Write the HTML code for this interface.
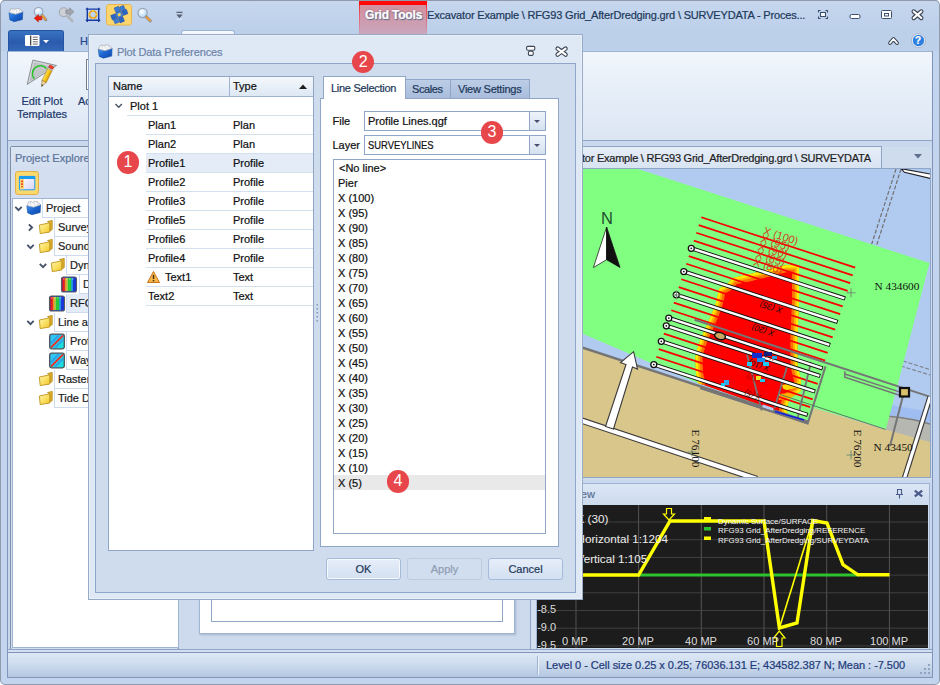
<!DOCTYPE html>
<html>
<head>
<meta charset="utf-8">
<title>Plot Data Preferences</title>
<style>
html,body{margin:0;padding:0;}
body{width:940px;height:685px;position:relative;overflow:hidden;background:#fff;font-family:"Liberation Sans",sans-serif;font-size:11px;color:#111;-webkit-text-stroke:0.22px;}
.abs{position:absolute;}
.t{position:absolute;white-space:nowrap;line-height:14px;}
#win{position:absolute;left:0;top:0;width:940px;height:685px;background:#c9d8ec;border-radius:5px;overflow:hidden;}
#winb{position:absolute;left:0;top:0;width:940px;height:685px;border-radius:5px;border:1px solid #8f9bad;box-sizing:border-box;pointer-events:none;}
#titlebar{left:0;top:0;width:940px;height:51px;background:linear-gradient(#c6d7ee,#bdd0ea 30px,#bdd0ea);}
#ribbon{left:8px;top:51px;width:924px;height:90px;background:linear-gradient(#f1f6fc 0%,#e6eef8 45%,#dce6f3 100%);border-top:1px solid #9db5d5;border-bottom:1px solid #8fa5c6;box-sizing:border-box;}
.badge{position:absolute;width:22.6px;height:22.6px;border-radius:50%;background:#e7464a;color:#fff;font-size:16px;line-height:22.6px;text-align:center;-webkit-text-stroke:0;}
.pr{position:absolute;height:19px;line-height:18px;font-size:11px;color:#1e1e1e;white-space:nowrap;padding-left:3px;border-left:1px solid #cfdcf0;border-bottom:1px solid #cfdcf0;box-sizing:border-box;width:200px;background:#fff;}
.pr.sel{background:#e4ecf7;}
.dr{position:absolute;left:37px;width:170px;height:19px;border-bottom:1px solid #d3e0f0;box-sizing:border-box;font-size:11px;}
.dr.p{left:18px;width:190px;}
.dr.sel{background:#e4ecf7;}
.dr .n{position:absolute;left:2px;top:2px;line-height:14px;white-space:nowrap;}
.dr.p .n{left:3px;}
.dr .ty{position:absolute;left:87px;top:2px;line-height:14px;white-space:nowrap;}
.combo{width:182px;height:20px;background:#fff;border:1px solid #8fa6c8;box-sizing:border-box;}
.combo .cb{position:absolute;right:0;top:0;width:15px;height:18px;background:linear-gradient(#eef3fa,#d5e1f0);border-left:1px solid #8fa6c8;}
.combo .cb:after{content:"";position:absolute;left:4.3px;top:7.5px;border:3.2px solid transparent;border-top:3.6px solid #474f6e;border-bottom:none;}
.li{position:absolute;left:4px;font-size:11px;line-height:14px;white-space:nowrap;}
.btn{position:absolute;top:558px;width:75px;height:22px;line-height:20px;text-align:center;font-size:11px;color:#1e395b;background:linear-gradient(#e6eef9,#d3e0f1);border:1px solid #a6badb;border-radius:3px;box-sizing:border-box;}
.btn.def{box-shadow:inset 0 0 0 1px #f6f9fd;}
.btn.dis{color:#8f9db3;background:#d1deef;border-color:#bccbe1;}

</style>
</head>
<body>
<div id="win">
  <div id="titlebar" class="abs"></div>
  <!-- quick access icons -->
  <svg class="abs" style="left:0;top:0" width="200" height="30" viewBox="0 0 200 30">
    <defs>
      <linearGradient id="bl" x1="0" y1="0" x2="1" y2="1"><stop offset="0" stop-color="#4a98f0"/><stop offset="0.5" stop-color="#1a62cc"/><stop offset="1" stop-color="#0f48a8"/></linearGradient>
      <radialGradient id="lens" cx="0.4" cy="0.35" r="0.7"><stop offset="0" stop-color="#ffffff"/><stop offset="1" stop-color="#a8d4f4"/></radialGradient>
      <g id="appico">
        <path d="M0.8 4.8 L14.6 3.8 L14.2 11.6 L6 13.7 L1.7 11.9 Z" fill="url(#bl)" stroke="#1450a8" stroke-width="0.6" stroke-linejoin="round"/>
        <path d="M1 4.6 L2.6 1 L5.3 0.4 L6.3 1.6 L8.4 0.3 L11.6 0.7 L14.4 3.9 L7.5 6.2 Z" fill="#f6f7f8" stroke="#a4a8ae" stroke-width="0.7" stroke-linejoin="round"/>
        <path d="M4.2 1 L5.2 4 M8 0.8 L8.6 4.4 M11 1 L11.6 4" stroke="#c4c8ce" stroke-width="0.6" fill="none"/>
      </g>
    </defs>
    <use href="#appico" x="8.2" y="8"/>
    <!-- zoom previous -->
    <g>
      <circle cx="38.6" cy="11.8" r="4.3" fill="url(#lens)" stroke="#9aa4b4" stroke-width="1.1"/>
      <path d="M42 15.4 L45.8 19.8" stroke="#8f949c" stroke-width="3.2" stroke-linecap="round"/>
      <path d="M42.3 15.7 L45.4 19.3" stroke="#f09a30" stroke-width="2" stroke-linecap="round"/>
      <path d="M34.2 18.2 L38.4 14.4 L38.4 16.5 L41.8 16.5 L41.8 19.9 L38.4 19.9 L38.4 22 Z" fill="#e8200c" stroke="#b81400" stroke-width="0.5" stroke-linejoin="round"/>
    </g>
    <!-- zoom next grey -->
    <g>
      <circle cx="63.8" cy="12.2" r="4.4" fill="#cdd1d7" stroke="#a6abb3" stroke-width="1.1"/>
      <path d="M67.2 15.8 L72.3 21" stroke="#b2b6bc" stroke-width="2.6" stroke-linecap="round"/>
      <path d="M73.9 11.8 L69.6 7.9 L69.6 10 L65.8 10 L65.8 13.6 L69.6 13.6 L69.6 15.7 Z" fill="#a2a6ac" stroke="#7f848c" stroke-width="0.6" stroke-linejoin="round"/>
    </g>
    <!-- extents -->
    <g>
      <path d="M87.3 7.8 V22 M98.7 7.8 V22 M85.8 9.1 H100.2 M85.8 20.2 H100.2" stroke="#1638a0" stroke-width="1.4" fill="none"/>
      <circle cx="93" cy="14.6" r="3.6" fill="none" stroke="#e49a18" stroke-width="1.7"/>
      <g fill="#f8d038"><circle cx="93" cy="11" r="1"/><circle cx="93" cy="18.2" r="1"/><circle cx="89.4" cy="14.6" r="1"/><circle cx="96.6" cy="14.6" r="1"/></g>
    </g>
    <!-- highlighted button -->
    <rect x="106.5" y="4.5" width="25" height="20.6" rx="2.6" fill="#fbd66e" stroke="#e6b64c"/>
    <g transform="translate(119.3 14.6) rotate(-22)">
      <rect x="-8.4" y="-2.3" width="5" height="4.6" fill="#2a66c8" stroke="#1c4ea4" stroke-width="0.5"/>
      <rect x="3.4" y="-2.3" width="5" height="4.6" fill="#2a66c8" stroke="#1c4ea4" stroke-width="0.5"/>
      <rect x="-2.3" y="-8" width="4.6" height="5" fill="#3a7ad8" stroke="#1c4ea4" stroke-width="0.5"/>
      <rect x="-2.3" y="3" width="4.6" height="5" fill="#2a66c8" stroke="#1c4ea4" stroke-width="0.5"/>
      <rect x="-7.4" y="2.6" width="4.4" height="4.4" fill="#3a7ad8" stroke="#1c4ea4" stroke-width="0.4"/>
      <rect x="3" y="-7" width="4.4" height="4.4" fill="#3a7ad8" stroke="#1c4ea4" stroke-width="0.4"/>
      <rect x="-2.6" y="-2.6" width="5.2" height="5.2" fill="#4a8ae0" stroke="#1c4ea4" stroke-width="0.5"/>
      <circle cx="0" cy="0" r="1.5" fill="#f6d84a"/>
    </g>
    <!-- magnifier -->
    <g>
      <circle cx="142.6" cy="13" r="4.6" fill="url(#lens)" stroke="#98a2b2" stroke-width="1.2"/>
      <path d="M146.2 16.8 L150.3 20.8" stroke="#8f949c" stroke-width="3.2" stroke-linecap="round"/>
      <path d="M146.5 17.1 L150 20.5" stroke="#f09a30" stroke-width="2" stroke-linecap="round"/>
    </g>
    <!-- customize -->
    <path d="M176.5 12.3 h6" stroke="#566274" stroke-width="1.3"/>
    <path d="M176.3 14.6 h6.4 l-3.2 3.6 z" fill="#566274"/>
    <path d="M176.8 19.3 h5.4" stroke="#e8eef6" stroke-width="0.8"/>
  </svg>
  <!-- Grid tools contextual tab -->
  <div class="abs" style="left:359px;top:0;width:68px;height:34px;background:linear-gradient(#d48f9d 0,#d095a4 35%,#caa6bd 100%);"></div>
  <div class="abs" style="left:359px;top:0;width:1px;height:34px;background:linear-gradient(#ff1010,#e85868 40%,rgba(216,150,170,0) 100%);"></div>
  <div class="abs" style="left:426px;top:0;width:1px;height:34px;background:linear-gradient(#ff1010,#e85868 40%,rgba(216,150,170,0) 100%);"></div>
  <div class="abs" style="left:359px;top:1px;width:68px;height:4px;background:#ff0808;"></div>
  <div class="t" style="left:365px;top:8px;font-size:12px;font-weight:bold;color:#fff;text-shadow:1px 1px 1px #4f6f90,0 0 2px #8a5868;letter-spacing:-0.2px;">Grid Tools</div>
  <div class="t" id="ttl" style="left:427px;top:8px;font-size:11px;color:#1e395b;letter-spacing:-0.17px;">Excavator Example \ RFG93 Grid_AfterDredging.grd \ SURVEYDATA - Proces...</div>
  <!-- window controls -->
  <svg class="abs" style="left:800px;top:0" width="140" height="52" viewBox="800 0 140 52">
    <g fill="none" stroke="#3b4f6e" stroke-width="1.1">
      <path d="M818.5 12.5 v-2 h2 M825.5 10.5 h2 v2 M827.5 16.5 v2 h-2 M820.5 18.5 h-2 v-2"/>
      <rect x="820.5" y="12.5" width="5" height="4" fill="#fff"/>
    </g>
    <rect x="850" y="14.5" width="10" height="4" rx="1.5" fill="#fff" stroke="#3b4f6e" stroke-width="1"/>
    <rect x="881.5" y="10.5" width="10" height="8" rx="1" fill="#fff" stroke="#3b4f6e" stroke-width="1"/>
    <rect x="884.5" y="13.5" width="4" height="2.5" fill="#fff" stroke="#3b4f6e" stroke-width="1"/>
    <path d="M913.7 11.5 L921.3 18 M921.3 11.5 L913.7 18" stroke="#3b4556" stroke-width="4.4" stroke-linecap="round"/>
    <path d="M913.7 11.5 L921.3 18 M921.3 11.5 L913.7 18" stroke="#fff" stroke-width="2.2" stroke-linecap="round"/>
    <path d="M890 43 l3.5 -4 l3.5 4" fill="none" stroke="#3b4556" stroke-width="3.8" stroke-linejoin="round" stroke-linecap="round"/>
    <path d="M890 43 l3.5 -4 l3.5 4" fill="none" stroke="#fff" stroke-width="1.8" stroke-linejoin="round" stroke-linecap="round"/>
    <circle cx="918.5" cy="40.5" r="6.3" fill="#2f7fe0" stroke="#e8eef6" stroke-width="1.3"/>
    <circle cx="918.5" cy="40.5" r="7" fill="none" stroke="#8f9fb6" stroke-width="0.6"/>
  </svg>
  <div class="t" style="left:915px;top:34px;font-size:10px;font-weight:bold;color:#fff;">?</div>
  <!-- app button -->
  <div class="abs" style="left:8px;top:30px;width:56px;height:21px;background:linear-gradient(#3a72c2,#2a5cae 55%,#3468b8);border:1px solid #2554a3;border-bottom:none;border-radius:3px 3px 0 0;box-sizing:border-box;"></div>
  <svg class="abs" style="left:8px;top:30px" width="56" height="21" viewBox="0 0 56 21">
    <rect x="17" y="5" width="14.5" height="11" rx="1.2" fill="#fff"/>
    <rect x="22" y="5.5" width="1.3" height="10" fill="#4a4a4a"/>
    <path d="M24.8 7.2 h5 M24.8 9.5 h5 M24.8 11.8 h5 M24.8 14.1 h5" stroke="#5a5a5a" stroke-width="0.9"/>
    <path d="M35 10 h6 l-3 3.2 z" fill="#fff"/>
  </svg>
  <div class="t" style="left:80px;top:34px;font-size:11px;color:#23458f;">Ho</div>
  <div class="abs" style="left:181px;top:30px;width:54px;height:22px;background:#f4f8fc;border:1px solid #9db5d5;border-bottom:none;border-radius:3px 3px 0 0;box-sizing:border-box;"></div>
  <div class="abs" style="left:0;top:0;width:940px;height:1px;background:#8f9bad;"></div>

  <div id="ribbon" class="abs"></div>
  <!-- ribbon content -->
  <svg class="abs" style="left:20px;top:56px" width="46" height="36" viewBox="0 0 46 36">
    <defs><linearGradient id="pen" x1="0" y1="0" x2="1" y2="0"><stop offset="0" stop-color="#fbe36a"/><stop offset="0.5" stop-color="#f8c818"/><stop offset="1" stop-color="#d89a08"/></linearGradient></defs>
    <path d="M7.2 28.4 L12.8 4.1 L36.6 9.5 Z" fill="#d4d7d9" stroke="#8d9297" stroke-width="1" stroke-linejoin="round"/>
    <path d="M10.3 24.6 L14.5 7 L31.5 10.9 Z" fill="#c2c6c9" stroke="#a4a9ae" stroke-width="0.5"/>
    <path d="M14.3 22.9 A7.6 7.6 0 0 1 26.5 12.6" fill="none" stroke="#2cc02c" stroke-width="1.5"/>
    <g transform="translate(31.2 11.1) rotate(26.3)">
      <rect x="-2.4" y="2.6" width="4.8" height="13.4" fill="url(#pen)" stroke="#a87808" stroke-width="0.5"/>
      <rect x="-2.4" y="1.3" width="4.8" height="1.5" fill="#d8dce0" stroke="#8a8e94" stroke-width="0.4"/>
      <rect x="-2.4" y="-1.4" width="4.8" height="2.8" rx="1" fill="#f04030" stroke="#b02010" stroke-width="0.5"/>
      <path d="M-2.4 16 L0 21.6 L2.4 16 Z" fill="#f4d8a4" stroke="#8a6a30" stroke-width="0.5"/>
      <path d="M-0.9 19.6 L0 21.8 L0.9 19.6 Z" fill="#333"/>
    </g>
  </svg>
  <div class="t" style="left:8px;top:95px;width:68px;text-align:center;color:#1e3a6e;font-size:11px;line-height:12.500px;white-space:normal;">Edit Plot Templates</div>
  <div class="t" style="left:78px;top:95px;color:#1e3a6e;font-size:11px;line-height:12.500px;">Ac</div>
  <div class="abs" style="left:86px;top:59px;width:3px;height:29px;background:#fff;border-left:1px solid #6f7c90;border-top:1px solid #6f7c90;border-bottom:1px solid #6f7c90;"></div>

  <!-- left Project Explorer panel -->
  <div class="abs" style="left:10px;top:146px;width:169px;height:504px;background:#d3dff0;border:1px solid #7f8fa8;border-radius:2px;box-sizing:border-box;"></div>
  <div class="abs" style="left:11px;top:147px;width:167px;height:21px;background:linear-gradient(#dbe6f4,#d3dff0);"></div>
  <div class="t" style="left:15px;top:151px;font-size:11px;color:#5b7398;">Project Explorer</div>
  <div class="abs" style="left:15px;top:171px;width:24px;height:24px;background:#fbd96f;border:1px solid #e2b248;border-radius:3px;box-sizing:border-box;"></div>
  <svg class="abs" style="left:15px;top:171px" width="24" height="24" viewBox="0 0 24 24">
    <defs><linearGradient id="wn" x1="0" y1="0" x2="1" y2="1"><stop offset="0" stop-color="#ffffff"/><stop offset="1" stop-color="#d8d4f4"/></linearGradient></defs>
    <rect x="4.4" y="5.4" width="15.4" height="13.4" rx="0.8" fill="url(#wn)" stroke="#189cf0" stroke-width="1"/>
    <rect x="4" y="5" width="16.2" height="3" rx="0.8" fill="#189cf0"/>
    <rect x="5" y="8" width="4" height="10.3" fill="#fbdc78"/>
    <rect x="6" y="9.4" width="2" height="1.8" fill="#f0502c"/>
    <rect x="6" y="12.2" width="2" height="1.8" fill="#f0502c"/>
    <rect x="6" y="15" width="2" height="1.2" fill="#f0502c"/>
  </svg>
  <div class="abs" style="left:12px;top:198px;width:167px;height:450px;background:#fff;border:1px solid #9fb4d2;box-sizing:border-box;"></div>
  <!-- tree rows -->
  <div id="ptree" class="abs" style="left:13px;top:199px;width:165px;height:210px;overflow:hidden;">
    <div class="pr" style="top:0;left:29px;">Project</div>
    <div class="pr" style="top:19px;left:41px;">Survey</div>
    <div class="pr" style="top:38px;left:41px;">Sounding Grid</div>
    <div class="pr" style="top:57px;left:53px;">Dynamic</div>
    <div class="pr" style="top:76px;left:66px;">Dynamic</div>
    <div class="pr sel" style="top:95px;left:53px;">RFG93</div>
    <div class="pr" style="top:114px;left:41px;">Line and area</div>
    <div class="pr" style="top:133px;left:53px;">Profile Lines</div>
    <div class="pr" style="top:152px;left:53px;">Waypoints</div>
    <div class="pr" style="top:171px;left:41px;">Raster</div>
    <div class="pr" style="top:190px;left:41px;">Tide Data</div>
  </div>
  <svg class="abs" style="left:13px;top:199px" width="80" height="210" viewBox="0 0 80 210">
    <defs>
      <g id="chev-d"><path d="M-3.2 -1.6 L0 1.6 L3.2 -1.6" fill="none" stroke="#46526a" stroke-width="1.9"/></g>
      <g id="chev-r"><path d="M-1.6 -3.2 L1.6 0 L-1.6 3.2" fill="none" stroke="#46526a" stroke-width="1.9"/></g>
      <g id="folder">
        <path d="M1.5 -5.4 L6.2 -6.6 L6.2 2.6 L3.8 4 L3.8 -4 Z" fill="#e2b22c" stroke="#b48614" stroke-width="0.8" stroke-linejoin="round"/>
        <path d="M-6.6 -2 L3.8 -4.2 L3.8 5 L-5.8 6.6 Z" fill="url(#fold)" stroke="#c0941c" stroke-width="0.9" stroke-linejoin="round"/>
      </g>
      <linearGradient id="fold" x1="0" y1="0" x2="1" y2="1"><stop offset="0" stop-color="#fff6b0"/><stop offset="0.6" stop-color="#f8dc58"/><stop offset="1" stop-color="#eec030"/></linearGradient>
      <g id="gridicon">
        <rect x="-7.5" y="-7.5" width="15" height="15" rx="2" fill="#2038c8" stroke="#555a60" stroke-width="1.1"/>
        <rect x="-6.6" y="-6.6" width="2.4" height="13.2" fill="#f01818"/>
        <rect x="-4.2" y="-6.6" width="1.6" height="13.2" fill="#f89018"/>
        <rect x="-2.6" y="-6.6" width="1.4" height="13.2" fill="#f0e828"/>
        <rect x="-1.2" y="-6.6" width="3.6" height="13.2" fill="#28c838"/>
        <rect x="2.4" y="-6.6" width="1.4" height="13.2" fill="#28c8e8"/>
        <rect x="3.8" y="-6.6" width="2.8" height="13.2" fill="#1838d8"/>
        <path d="M-6 -5.5 h12" stroke="#fff" stroke-opacity="0.5" stroke-width="1.2" stroke-dasharray="1.5 1.5"/>
      </g>
      <g id="lineicon">
        <rect x="-7.3" y="-7.3" width="14.6" height="14.6" rx="1.8" fill="url(#cy)" stroke="#4a5258" stroke-width="1.3"/>
        <path d="M-6.2 2 L2 -6.2 M-2 6.2 L6.2 -2" stroke="#3878e8" stroke-opacity="0.55" stroke-width="2"/>
        <path d="M-6 6 L6 -6" stroke="#e8302a" stroke-width="1.8"/>
      </g>
      <linearGradient id="cy" x1="0" y1="0" x2="1" y2="1"><stop offset="0" stop-color="#38b8f8"/><stop offset="0.5" stop-color="#20d8ec"/><stop offset="1" stop-color="#18e0d8"/></linearGradient>
    </defs>
    <use href="#chev-d" x="5.5" y="9.5"/>
    <use href="#appico" x="13" y="2"/>
    <use href="#chev-r" x="17.5" y="28.5"/>
    <use href="#folder" x="33" y="28"/>
    <use href="#chev-d" x="17.5" y="47.5"/>
    <use href="#folder" x="33" y="47"/>
    <use href="#chev-d" x="30" y="66.5"/>
    <use href="#folder" x="45" y="66"/>
    <use href="#gridicon" x="56" y="85.5"/>
    <use href="#gridicon" x="44" y="104.5"/>
    <use href="#chev-d" x="17.5" y="123.5"/>
    <use href="#folder" x="33" y="123"/>
    <use href="#lineicon" x="44" y="142.5"/>
    <use href="#lineicon" x="44" y="161.5"/>
    <use href="#folder" x="33" y="180"/>
    <use href="#folder" x="33" y="199"/>
  </svg>

  <!-- page/doc area behind dialog -->
  <div class="abs" style="left:179px;top:147px;width:352px;height:503px;background:#cddaed;"></div>
  <div class="abs" style="left:199px;top:160px;width:316px;height:474px;background:#fff;border:1px solid #9fb4d2;box-sizing:border-box;box-shadow:1px 1px 2px rgba(90,110,140,.35);"></div>
  <div class="abs" style="left:211px;top:172px;width:292px;height:450px;background:#fff;border:1px solid #8fa6c8;box-sizing:border-box;"></div>
  <!-- splitter -->
  <div class="abs" style="left:530px;top:147px;width:6px;height:503px;background:#d3dff0;border-left:1px solid #8fa5c6;box-sizing:border-box;"></div>
  <!-- right doc container -->
  <div class="abs" style="left:536px;top:147px;width:396px;height:333px;background:#cfdcee;"></div>
  <!-- doc tab -->
  <div class="abs" style="left:540px;top:146px;width:342px;height:23px;background:linear-gradient(#e6edf7,#d8e3f2);border:1px solid #8fa5c6;border-bottom:none;box-sizing:border-box;"></div>
  <div class="t" id="doctab" style="left:582px;top:151px;font-size:11px;letter-spacing:-0.24px;color:#1e1e1e;">tor Example \ RFG93 Grid_AfterDredging.grd \ SURVEYDATA</div>
  <svg class="abs" style="left:910.5px;top:151px" width="14" height="10" viewBox="0 0 14 10"><path d="M3 3 h8 l-4 4.5 z" fill="#5f6f8f"/></svg>
  <!-- map frame -->
  <div class="abs" style="left:581px;top:168px;width:350px;height:310px;background:#b3cbee;border:1px solid #8fa5c6;box-sizing:border-box;"></div>

  <svg class="abs" style="left:582px;top:169px" width="348" height="308" viewBox="582 169 348 308" font-family="'Liberation Sans',sans-serif">
  <defs><clipPath id="gclip"><polygon points="582,169 638,169 929.5,263 886,429 814,408 808,421.7 698,383 582,333.5"/></clipPath><clipPath id="oclip"><polygon points="799,265 785.5,265.3 751.5,273.8 732.8,278 727.7,284 719,289 716.6,301 712.3,313 708,323 700.4,340 697,350 695.5,357 696,373 698,383 690,400 700,440 800,440 786,410 789.4,399 800.5,391 801,380 797.5,366 797.3,340 799,300"/></clipPath></defs>
  <rect x="582" y="169" width="348" height="308" fill="#b1caf0"/>
  <polygon points="886,404 930,412 930,426 886,418" fill="#9fbdf0"/>
  <polygon points="886,416 900,417 915,420 930,424 930,443 884,430" fill="#b5b7b0"/>
  <path d="M886,416 L900,417.5 L915,420 L930,424" stroke="#7f7f7f" stroke-width="1.5" fill="none"/>
  <polygon points="582,347.5 808,421.7 814,408 885.5,429.4 930,442 930,477 582,477" fill="#d9c68b"/>
  <path d="M896,169 L871.4,245 M901,169 L876.4,246" stroke="#707070" stroke-width="1.2" stroke-dasharray="4 1.8" fill="none"/>
  <path d="M903,361 L930,369.5 M901,366 L930,375" stroke="#7a8088" stroke-width="1.1" stroke-dasharray="4 1.8" fill="none"/>
  <polygon points="901,168.6 931,174.2 931,178.6 904.5,172.3" fill="#fff" stroke="#222" stroke-width="1.1"/>
  <polygon points="582,169 638,169 929.5,263 886,429 814,408 808,421.7 698,383 582,333.5" fill="#80ff80"/>
  <g clip-path="url(#gclip)"><g clip-path="url(#oclip)">
   <polygon points="799,265 785.5,265.3 751.5,273.8 732.8,278 727.7,284 719,289 716.6,301 712.3,313 708,323 700.4,340 697,350 695.5,357 696,373 698,383 690,400 700,440 800,440 786,410 789.4,399 800.5,391 801,380 797.5,366 797.3,340 799,300" fill="#ff0000"/>
   <polygon points="799,265 785.5,265.3 751.5,273.8 732.8,278 727.7,284 719,289 716.6,301 712.3,313 708,323 700.4,340 697,350 695.5,357 696,373 698,383 690,400 700,440 800,440 786,410 789.4,399 800.5,391 801,380 797.5,366 797.3,340 799,300" fill="none" stroke="#ff7000" stroke-width="14" stroke-linejoin="round"/>
   <polygon points="799,265 785.5,265.3 751.5,273.8 732.8,278 727.7,284 719,289 716.6,301 712.3,313 708,323 700.4,340 697,350 695.5,357 696,373 698,383 690,400 700,440 800,440 786,410 789.4,399 800.5,391 801,380 797.5,366 797.3,340 799,300" fill="none" stroke="#ffb400" stroke-width="8.5" stroke-linejoin="round"/>
   <polygon points="799,265 785.5,265.3 751.5,273.8 732.8,278 727.7,284 719,289 716.6,301 712.3,313 708,323 700.4,340 697,350 695.5,357 696,373 698,383 690,400 700,440 800,440 786,410 789.4,399 800.5,391 801,380 797.5,366 797.3,340 799,300" fill="none" stroke="#f8f000" stroke-width="4.4" stroke-linejoin="round"/>
   <polygon points="782,385 803,381 803,386 784,391" fill="#ffd800"/>
   <polygon points="778,394 797,392.5 796,397 779,400" fill="#ffb000"/>
  </g></g>
  <path d="M582,347.5 L808,421.7" stroke="#757575" stroke-width="2.5" fill="none"/>
  <path d="M700,388.3 L808,423.8" stroke="#3a4ac8" stroke-width="0.8" fill="none"/>
  <polygon points="763,404.5 773.5,408 773,411 762,407.3" fill="#b1caf0"/>
  <path d="M701.3,217.3 l153.9,50.3" stroke="#fa0000" stroke-width="1.7"/>
  <path d="M698.8,225.1 l153.9,50.3" stroke="#fa0000" stroke-width="1.7"/>
  <path d="M696.3,232.8 l153.9,50.3" stroke="#fa0000" stroke-width="1.7"/>
  <path d="M693.8,240.6 l153.9,50.3" stroke="#fa0000" stroke-width="1.7"/>
  <path d="M688.8,256.1 l153.9,50.3" stroke="#fa0000" stroke-width="1.7"/>
  <path d="M686.3,263.8 l153.9,50.3" stroke="#fa0000" stroke-width="1.7"/>
  <path d="M681.3,279.3 l153.9,50.3" stroke="#fa0000" stroke-width="1.7"/>
  <path d="M678.8,287.1 l153.9,50.3" stroke="#fa0000" stroke-width="1.7"/>
  <path d="M673.8,302.6 l153.9,50.3" stroke="#fa0000" stroke-width="1.7"/>
  <path d="M671.3,310.3 l153.9,50.3" stroke="#fa0000" stroke-width="1.7"/>
  <path d="M663.8,333.6 l153.9,50.3" stroke="#fa0000" stroke-width="1.7"/>
  <path d="M658.8,349.1 l153.9,50.3" stroke="#fa0000" stroke-width="1.7"/>
  <path d="M656.3,356.8 l153.9,50.3" stroke="#fa0000" stroke-width="1.7"/>
  <g stroke="#757575" fill="none">
   <path d="M694.5,319.8 L929.6,396.6" stroke-width="2"/>
   <path d="M825.5,366.4 L807.7,423.4 L700,388" stroke-width="2"/>
   <path d="M811,362 L797.4,419" stroke-width="1.8"/>
   <path d="M747,354.5 L761.7,410.6" stroke-width="1.8"/>
   <path d="M787,367 L774.5,408" stroke-width="1.8"/>
   <path d="M844.8,371.3 L844.8,377.3 L899.5,395.2" stroke-width="1.5"/>
   <path d="M844.8,374 L901,392.4" stroke-width="1.5"/>
   <path d="M904,392 L890,446" stroke-width="2"/>
   <path d="M780,394.5 L885.5,429.4" stroke="#4f6f5f" stroke-width="0.9"/>
  </g>
  <text transform="translate(762.5,234.0) rotate(18)" font-size="11" fill="#dc2a18" fill-opacity="0.9">X (100)</text>
  <text transform="translate(760.0,241.8) rotate(18)" font-size="11" fill="#dc2a18" fill-opacity="0.9">X (95)</text>
  <text transform="translate(757.5,249.5) rotate(18)" font-size="11" fill="#dc2a18" fill-opacity="0.9">X (90)</text>
  <text transform="translate(755.0,257.2) rotate(18)" font-size="11" fill="#dc2a18" fill-opacity="0.9">X (85)</text>
  <text transform="translate(752.5,265.0) rotate(18)" font-size="11" fill="#dc2a18" fill-opacity="0.9">X (80)</text>
  <path d="M691.3,248.3 l153.9,50.3" stroke="#111" stroke-width="4.2"/>
  <path d="M692.3,248.6 l152.1,49.7" stroke="#fff" stroke-width="2.4"/>
  <circle cx="691.3" cy="248.3" r="3" fill="#fff" stroke="#111" stroke-width="1.3"/><circle cx="691.3" cy="248.3" r="0.9" fill="#111"/>
  <path d="M683.8,271.6 l153.9,50.3" stroke="#111" stroke-width="4.2"/>
  <path d="M684.8,271.9 l152.1,49.7" stroke="#fff" stroke-width="2.4"/>
  <circle cx="683.8" cy="271.6" r="3" fill="#fff" stroke="#111" stroke-width="1.3"/><circle cx="683.8" cy="271.6" r="0.9" fill="#111"/>
  <path d="M676.3,294.8 l153.9,50.3" stroke="#111" stroke-width="4.2"/>
  <path d="M677.3,295.1 l152.1,49.7" stroke="#fff" stroke-width="2.4"/>
  <circle cx="676.3" cy="294.8" r="3" fill="#fff" stroke="#111" stroke-width="1.3"/><circle cx="676.3" cy="294.8" r="0.9" fill="#111"/>
  <path d="M668.8,318.1 l153.9,50.3" stroke="#111" stroke-width="4.2"/>
  <path d="M669.8,318.4 l152.1,49.7" stroke="#fff" stroke-width="2.4"/>
  <circle cx="668.8" cy="318.1" r="3" fill="#fff" stroke="#111" stroke-width="1.3"/><circle cx="668.8" cy="318.1" r="0.9" fill="#111"/>
  <path d="M666.3,325.8 l153.9,50.3" stroke="#111" stroke-width="4.2"/>
  <path d="M667.3,326.1 l152.1,49.7" stroke="#fff" stroke-width="2.4"/>
  <circle cx="666.3" cy="325.8" r="3" fill="#fff" stroke="#111" stroke-width="1.3"/><circle cx="666.3" cy="325.8" r="0.9" fill="#111"/>
  <path d="M661.3,341.3 l153.9,50.3" stroke="#111" stroke-width="4.2"/>
  <path d="M662.3,341.6 l152.1,49.7" stroke="#fff" stroke-width="2.4"/>
  <circle cx="661.3" cy="341.3" r="3" fill="#fff" stroke="#111" stroke-width="1.3"/><circle cx="661.3" cy="341.3" r="0.9" fill="#111"/>
  <path d="M653.8,364.6 l153.9,50.3" stroke="#111" stroke-width="4.2"/>
  <path d="M654.8,364.9 l152.1,49.7" stroke="#fff" stroke-width="2.4"/>
  <circle cx="653.8" cy="364.6" r="3" fill="#fff" stroke="#111" stroke-width="1.3"/><circle cx="653.8" cy="364.6" r="0.9" fill="#111"/>
  <text transform="translate(783,308) rotate(197.5)" font-size="8.5" fill="#111" font-style="italic">X (35)</text>
  <text transform="translate(775,331) rotate(197.5)" font-size="8.5" fill="#111" font-style="italic">X (20)</text>
  <text transform="translate(776,356) rotate(197.5)" font-size="8" fill="#c00000" font-style="italic">X (15)</text>
  <text transform="translate(770,366) rotate(197.5)" font-size="8" fill="#111" font-style="italic">X (10)</text>
  <text transform="translate(768,380) rotate(197.5)" font-size="8" fill="#c00000" font-style="italic">X (10)</text>
  <text transform="translate(762,395) rotate(197.5)" font-size="8" fill="#7a0000" font-style="italic">X (5)</text>
  <g><rect x="752" y="353" width="10" height="5" fill="#1030d0"/><rect x="757" y="358" width="8" height="4" fill="#1890f0"/><rect x="763" y="362" width="6" height="4" fill="#20c8f0"/><rect x="747" y="362" width="5" height="4" fill="#20c8f0"/><rect x="764" y="352" width="8" height="4" fill="#102080"/><rect x="772" y="356" width="5" height="3" fill="#20a0f0"/><rect x="756" y="376" width="5" height="4" fill="#f0e020"/><rect x="760" y="379" width="5" height="3" fill="#20c8f0"/><rect x="724" y="380" width="5" height="5" fill="#30a8f0"/><rect x="721" y="383" width="4" height="3" fill="#20c8f0"/></g>
  <path d="M775,411.5 L804,420" stroke="#1020e0" stroke-width="1.8"/>
  <ellipse cx="720" cy="336" rx="5.5" ry="3.5" fill="#c8a860" stroke="#111" stroke-width="1.5" transform="rotate(17 720 336)"/>
  <rect x="900" y="388" width="9" height="8.5" fill="#d9c06a" stroke="#111" stroke-width="2.2"/>
  <path d="M930,397 L904.5,478" stroke="#3a3a3a" stroke-width="5.5"/><path d="M930,397 L904.5,478" stroke="#fff" stroke-width="3.2"/>
  <path d="M580,420 L757,479" stroke="#3a3a3a" stroke-width="6.5"/><path d="M580,420 L757,479" stroke="#fff" stroke-width="4.3"/>
  <path d="M605.5,426.5 L626,364.5 L620.5,362.5 L633.6,351.7 L637.5,369 L632.5,367 L613.5,429 Z" fill="#fff" stroke="#3a3a3a" stroke-width="1.1" stroke-linejoin="miter"/>
  <polygon points="606.6,227 593.4,267.5 606.6,259.7" fill="#fff" stroke="#222" stroke-width="0.8"/>
  <polygon points="606.6,227 620,267.5 606.6,259.7" fill="#111" stroke="#111" stroke-width="0.8"/>
  <text x="601" y="223.5" font-size="16.5" fill="#1f4f2f">N</text>
  <path d="M846.5,292.8 h9 M851.0,288.3 v9" stroke="#6f8f6f" stroke-width="1"/>
  <path d="M672.0,295.0 h9 M676.5,290.5 v9" stroke="#6f8f6f" stroke-width="1"/>
  <path d="M846.5,455.0 h9 M851.0,450.5 v9" stroke="#6f8f6f" stroke-width="1"/>
  <path d="M687.5,452.0 h9 M692.0,447.5 v9" stroke="#6f8f6f" stroke-width="1"/>
  <text x="874.5" y="289.5" font-size="11.3" font-family="'Liberation Serif',serif" fill="#111">N 434600</text>
  <text x="873.5" y="451" font-size="11.3" font-family="'Liberation Serif',serif" fill="#111">N 43450</text>
  <text transform="translate(853.5,429.5) rotate(90)" font-size="11.3" font-family="'Liberation Serif',serif" fill="#111">E 76200</text>
  <text transform="translate(691.5,429.5) rotate(90)" font-size="11.3" font-family="'Liberation Serif',serif" fill="#111">E 76100</text>
  </svg>

  <div class="abs" style="left:536px;top:483px;width:394px;height:167px;background:#cfdcee;border:1px solid #9fb4d2;box-sizing:border-box;"></div>
  <div class="abs" style="left:537px;top:484px;width:392px;height:21px;background:linear-gradient(#dce7f5,#ccdaee);"></div>
  <div class="t" id="pv" style="left:537px;top:487px;font-size:11px;color:#5b7398;">Profile View</div>
  <svg class="abs" style="left:892px;top:486px" width="36" height="16" viewBox="892 486 36 16"><g stroke="#4a5a8a" fill="none"><path d="M897.5 489.5 h4 v5 h-4 z M896 494.5 h7 M899.5 494.5 v4" stroke-width="1.1"/><path d="M914.8 490.6 l7.4 5.8 M922.2 490.6 l-7.4 5.8" stroke-width="2.3"/></g></svg>
  <svg class="abs" style="left:537px;top:505px" width="390.8" height="143" viewBox="537 505 390.8 143" font-family="'Liberation Sans',sans-serif">
  <rect x="537" y="505" width="392" height="143" fill="#1c1c1c"/>
  <path d="M576.0,505 V648" stroke="#6c6c6c" stroke-width="0.7"/>
  <path d="M638.6,505 V648" stroke="#6c6c6c" stroke-width="0.7"/>
  <path d="M701.3,505 V648" stroke="#6c6c6c" stroke-width="0.7"/>
  <path d="M764.0,505 V648" stroke="#6c6c6c" stroke-width="0.7"/>
  <path d="M826.7,505 V648" stroke="#6c6c6c" stroke-width="0.7"/>
  <path d="M889.4,505 V648" stroke="#6c6c6c" stroke-width="0.7"/>
  <path d="M537,522.0 H929" stroke="#4a4a4a" stroke-width="0.8"/>
  <path d="M537,539.7 H929" stroke="#4a4a4a" stroke-width="0.8"/>
  <path d="M537,557.4 H929" stroke="#4a4a4a" stroke-width="0.8"/>
  <path d="M537,575.1 H929" stroke="#4a4a4a" stroke-width="0.8"/>
  <path d="M537,592.8 H929" stroke="#4a4a4a" stroke-width="0.8"/>
  <path d="M537,610.5 H929" stroke="#4a4a4a" stroke-width="0.8"/>
  <path d="M537,628.2 H929" stroke="#4a4a4a" stroke-width="0.8"/>
  <path d="M537,645.9 H929" stroke="#4a4a4a" stroke-width="0.8"/>
  <path d="M638.6,575 H858" stroke="#2ec22e" stroke-width="3"/>
  <polyline points="537,575 638.6,575 670,521 764,521 779.4,628 797,623 812.8,520.5 827,523 843,564.6 858,574.8 889.5,574.8" fill="none" stroke="#ffff00" stroke-width="3.4" stroke-linejoin="miter"/>
  <path d="M779.4,628 L812.5,521" stroke="#ffff00" stroke-width="1.6"/>
  <path d="M666.5,508.5 h5 v5.5 h3 l-5.5,6 l-5.5,-6 h3 z" fill="none" stroke="#ffff00" stroke-width="1.2"/>
  <path d="M776.5,646.5 h5.5 v-8.5 h3 l-5.7,-7 l-5.7,7 h2.9 z" fill="none" stroke="#ffff00" stroke-width="1.2"/>
  <rect x="704" y="517" width="7" height="4" fill="#ffff00"/><rect x="704" y="527" width="7" height="3.5" fill="#2ec22e"/><rect x="704" y="536.5" width="7" height="3.5" fill="#ffff00"/>
  <text x="718" y="524" font-size="7.95" fill="#f4f4f4">Dynamic Surface/SURFACE</text>
  <text x="718" y="533.5" font-size="7.95" fill="#f4f4f4">RFG93 Grid_AfterDredging/REFERENCE</text>
  <text x="718" y="543" font-size="7.95" fill="#f4f4f4">RFG93 Grid_AfterDredging/SURVEYDATA</text>
  <text x="576.5" y="523.5" font-size="11.7" fill="#eee">X (30)</text>
  <text x="576.5" y="543.5" font-size="11.7" fill="#eee">Horizontal 1:1204</text>
  <text x="576.5" y="563.5" font-size="11.7" fill="#eee">Vertical 1:105</text>
  <text x="537.2" y="613.5" font-size="11" fill="#ddd">-8.5</text>
  <text x="537.2" y="631.5" font-size="11" fill="#ddd">-9.0</text>
  <text x="537.2" y="649.5" font-size="11" fill="#ddd">-9.5</text>
  <text x="562" y="645" font-size="11.1" fill="#ddd">0 MP</text>
  <text x="622" y="645" font-size="11.1" fill="#ddd">20 MP</text>
  <text x="685" y="645" font-size="11.1" fill="#ddd">40 MP</text>
  <text x="747" y="645" font-size="11.1" fill="#ddd">60 MP</text>
  <text x="810" y="645" font-size="11.1" fill="#ddd">80 MP</text>
  <text x="870" y="645" font-size="11.1" fill="#ddd">100 MP</text>
  </svg>

  <!-- status bar -->
  <div class="abs" style="left:8px;top:649px;width:924px;height:1px;background:#8fa5c6;"></div><div class="abs" style="left:8px;top:650px;width:924px;height:3px;background:#d3dff0;"></div>
  <div class="abs" style="left:8px;top:652px;width:924px;height:26px;background:linear-gradient(#dde8f5 0,#d0deef 40%,#b4c7e1 100%);border-top:1px solid #7f96ba;border-bottom:1px solid #7f96ba;box-sizing:border-box;"></div>
  <div class="abs" style="left:0;top:678px;width:940px;height:7px;background:#c3d5ee;"></div>
  <div class="abs" style="left:537px;top:656px;width:1px;height:19px;background:#9fb4d2;"></div>
  <div class="abs" style="left:538px;top:656px;width:1px;height:19px;background:#eef3fa;"></div>
  <div class="t" id="stat" style="left:546px;top:658px;font-size:11px;color:#233b7a;letter-spacing:-0.04px;">Level 0 - Cell size 0.25 x 0.25; 76036.131 E; 434582.387 N; Mean : -7.500</div>
  <svg class="abs" style="left:920px;top:664px" width="12" height="12" viewBox="0 0 12 12"><g fill="#8fa3c2"><rect x="8" y="8" width="2" height="2"/><rect x="4" y="8" width="2" height="2"/><rect x="8" y="4" width="2" height="2"/><rect x="0" y="8" width="2" height="2"/><rect x="4" y="4" width="2" height="2"/><rect x="8" y="0" width="2" height="2"/></g></svg>
  <!-- window borders -->
  <div class="abs" style="left:0;top:51px;width:8px;height:627px;background:linear-gradient(90deg,#c3d5ee 0,#c3d5ee 7px,#7f96ba 7px,#7f96ba 8px);"></div>
  <div class="abs" style="left:932px;top:51px;width:8px;height:627px;background:linear-gradient(90deg,#7f96ba 0,#7f96ba 1px,#c3d5ee 1px,#c3d5ee 8px);"></div>

  <!-- dialog -->
  <div class="abs" style="left:88px;top:34px;width:495px;height:566px;background:#dfe9f5;border:1px solid #97aac8;box-sizing:border-box;box-shadow:0 0 0 1px rgba(255,255,255,.35) inset;"></div>
  <svg class="abs" style="left:97px;top:44px" width="18" height="18" viewBox="0 0 18 18"><use href="#appico" x="0.5" y="0.5"/></svg>
  <div class="t" id="dlgt" style="left:117px;top:45px;font-size:11px;color:#6d84aa;letter-spacing:-0.1px;">Plot Data Preferences</div>
  <svg class="abs" style="left:520px;top:40px" width="56" height="22" viewBox="520 40 56 22">
    <rect x="526.6" y="46.4" width="8.2" height="3.8" rx="1.2" fill="#fff" stroke="#3b4556" stroke-width="1.1"/>
    <rect x="528.4" y="51.2" width="4.8" height="4.2" rx="1.2" fill="#fff" stroke="#3b4556" stroke-width="1.1"/>
    <path d="M557.6 48.6 L565.6 54.6 M565.6 48.6 L557.6 54.6" stroke="#3b4556" stroke-width="4.4" stroke-linecap="round"/>
    <path d="M557.6 48.6 L565.6 54.6 M565.6 48.6 L557.6 54.6" stroke="#fff" stroke-width="2.2" stroke-linecap="round"/>
  </svg>
  <div class="abs" style="left:95px;top:63px;width:481px;height:530px;background:#cfdcee;border:1px solid #8fa6c8;box-sizing:border-box;"></div>
  <!-- tree list -->
  <div class="abs" style="left:108px;top:76px;width:206px;height:475px;background:#fff;border:1px solid #8fa6c8;box-sizing:border-box;overflow:hidden;">
    <div class="abs" style="left:0;top:0;width:204px;height:20px;background:linear-gradient(#f4f8fc,#dde8f4);border-bottom:1px solid #9fb4d2;box-sizing:border-box;"></div>
    <div class="abs" style="left:120px;top:0;width:1px;height:20px;background:#9fb4d2;"></div>
    <div class="t" style="left:4px;top:2px;font-size:11px;">Name</div>
    <div class="t" style="left:124px;top:2px;font-size:11px;">Type</div>
    <svg class="abs" style="left:189px;top:6px" width="10" height="8" viewBox="0 0 10 8"><path d="M1 6 h8 l-4 -4.5 z" fill="#1e1e1e"/></svg>
    <svg class="abs" style="left:4px;top:22px" width="12" height="14" viewBox="0 0 12 14"><path d="M2.5 5 L5.7 8.2 L8.9 5" fill="none" stroke="#4a5668" stroke-width="1.5"/></svg>
    <div class="dr p" style="top:20px;"><span class="n" style="left:3px">Plot 1</span></div>
    <div class="dr" style="top:39px;"><span class="n">Plan1</span><span class="ty">Plan</span></div>
    <div class="dr" style="top:58px;"><span class="n">Plan2</span><span class="ty">Plan</span></div>
    <div class="dr sel" style="top:77px;"><span class="n">Profile1</span><span class="ty">Profile</span></div>
    <div class="dr" style="top:96px;"><span class="n">Profile2</span><span class="ty">Profile</span></div>
    <div class="dr" style="top:115px;"><span class="n">Profile3</span><span class="ty">Profile</span></div>
    <div class="dr" style="top:134px;"><span class="n">Profile5</span><span class="ty">Profile</span></div>
    <div class="dr" style="top:153px;"><span class="n">Profile6</span><span class="ty">Profile</span></div>
    <div class="dr" style="top:172px;"><span class="n">Profile4</span><span class="ty">Profile</span></div>
    <div class="dr" style="top:191px;"><span class="n" style="left:19px">Text1</span><span class="ty">Text</span></div>
    <div class="dr" style="top:210px;"><span class="n">Text2</span><span class="ty">Text</span></div>
    <svg class="abs" style="left:37px;top:193px" width="15" height="14" viewBox="0 0 15 14">
      <path d="M7.5 1.5 L13.5 12.5 H1.5 Z" fill="#f7b64a" stroke="#c9741a" stroke-width="1" stroke-linejoin="round"/>
      <path d="M7.5 5 v4" stroke="#3a2a10" stroke-width="1.4"/><rect x="6.8" y="10" width="1.4" height="1.4" fill="#3a2a10"/>
    </svg>
  </div>
  <!-- splitter dots -->
  <svg class="abs" style="left:316px;top:304px" width="3" height="18" viewBox="0 0 3 18"><g fill="#7f96b8"><rect x="0.5" y="0" width="1.5" height="1.5"/><rect x="0.5" y="4" width="1.5" height="1.5"/><rect x="0.5" y="8" width="1.5" height="1.5"/><rect x="0.5" y="12" width="1.5" height="1.5"/><rect x="0.5" y="16" width="1.5" height="1.5"/></g></svg>
  <!-- tabs -->
  <div class="abs" style="left:405px;top:79px;width:46px;height:20px;background:linear-gradient(#bccde6,#a9bddb);border:1px solid #8fa6c8;box-sizing:border-box;"></div>
  <div class="abs" style="left:450px;top:79px;width:80px;height:20px;background:linear-gradient(#bccde6,#a9bddb);border:1px solid #8fa6c8;box-sizing:border-box;"></div>
  <div class="t" id="tb2" style="left:412px;top:82px;font-size:11px;letter-spacing:-0.4px;color:#1e395b;">Scales</div>
  <div class="t" id="tb3" style="left:458px;top:82px;font-size:11px;letter-spacing:-0.23px;color:#1e395b;">View Settings</div>
  <div class="abs" style="left:320px;top:98px;width:239px;height:449px;background:#fff;border:1px solid #8fa6c8;box-sizing:border-box;"></div>
  <div class="abs" style="left:323px;top:76px;width:83px;height:23px;background:#fff;border:1px solid #8fa6c8;border-bottom:none;box-sizing:border-box;"></div>
  <div class="t" id="tb1" style="left:331px;top:81px;font-size:11px;letter-spacing:-0.29px;color:#1e395b;">Line Selection</div>
  <!-- File / Layer -->
  <div class="t" style="left:332.5px;top:114px;font-size:11px;">File</div>
  <div class="t" style="left:332.5px;top:138px;font-size:11px;">Layer</div>
  <div class="abs combo" style="left:364px;top:111px;"><span class="t" style="left:3px;top:2px;font-size:11px;">Profile Lines.qgf</span><div class="cb"></div></div>
  <div class="abs combo" style="left:364px;top:135px;"><span class="t" style="left:3px;top:2px;font-size:11px;transform:scaleX(0.853);transform-origin:0 0;">SURVEYLINES</span><div class="cb"></div></div>
  <!-- list -->
  <div class="abs" style="left:333px;top:159px;width:213px;height:375px;background:#fff;border:1px solid #8fa6c8;box-sizing:border-box;overflow:hidden;">
    <div class="abs" style="left:0;top:315px;width:211px;height:15px;background:#e9e9e9;"></div>
    <div class="li" style="top:1px;left:5px;">&lt;No line&gt;</div>
    <div class="li" style="top:16px;">Pier</div>
    <div class="li" style="top:31px;">X (100)</div>
    <div class="li" style="top:46px;">X (95)</div>
    <div class="li" style="top:61px;">X (90)</div>
    <div class="li" style="top:76px;">X (85)</div>
    <div class="li" style="top:91px;">X (80)</div>
    <div class="li" style="top:106px;">X (75)</div>
    <div class="li" style="top:121px;">X (70)</div>
    <div class="li" style="top:136px;">X (65)</div>
    <div class="li" style="top:151px;">X (60)</div>
    <div class="li" style="top:166px;">X (55)</div>
    <div class="li" style="top:181px;">X (50)</div>
    <div class="li" style="top:196px;">X (45)</div>
    <div class="li" style="top:211px;">X (40)</div>
    <div class="li" style="top:226px;">X (35)</div>
    <div class="li" style="top:241px;">X (30)</div>
    <div class="li" style="top:256px;">X (25)</div>
    <div class="li" style="top:271px;">X (20)</div>
    <div class="li" style="top:286px;">X (15)</div>
    <div class="li" style="top:301px;">X (10)</div>
    <div class="li" style="top:316px;">X (5)</div>
  </div>
  <!-- buttons -->
  <div class="btn def" style="left:326px;">OK</div>
  <div class="btn dis" style="left:407px;">Apply</div>
  <div class="btn" style="left:488px;">Cancel</div>
  <!-- badges -->
  <div class="badge" style="left:116.6px;top:151.1px;">1</div>
  <div class="badge" style="left:351.8px;top:50.9px;">2</div>
  <div class="badge" style="left:480.7px;top:121.4px;">3</div>
  <div class="badge" style="left:386.6px;top:470.1px;">4</div>

  <div id="winb"></div>
</div>
</body>
</html>
